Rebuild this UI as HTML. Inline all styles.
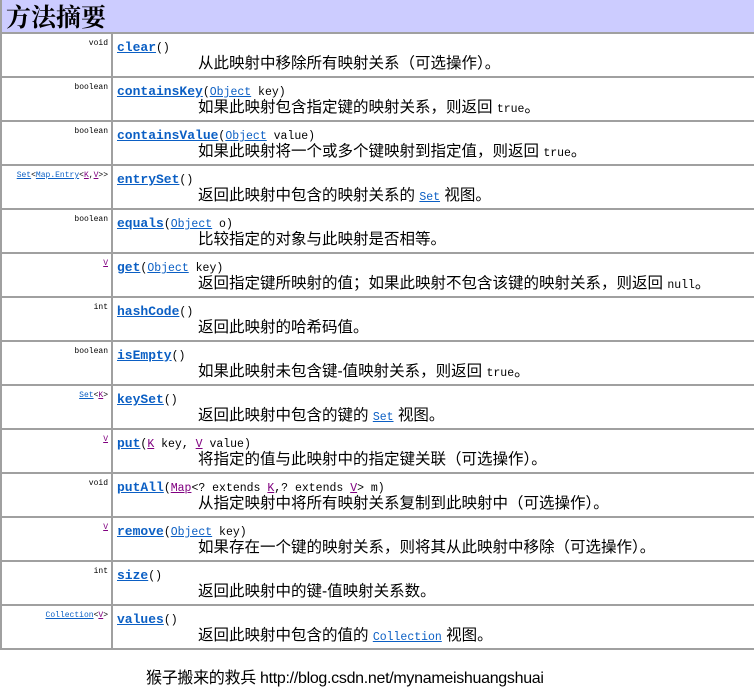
<!DOCTYPE html>
<html><head><meta charset="utf-8"><style>
*{margin:0;padding:0;box-sizing:border-box}
body{width:754px;height:689px;background:#fff;position:relative;overflow:hidden;font-family:"Liberation Sans","Noto Sans CJK SC",sans-serif}
.hd{position:absolute;left:0;top:0;width:754px;height:34px;background:#ccccff;border-bottom:2px solid #a0a0a0;border-left:2px solid #a0a0a0}
.hd span{position:absolute;left:4px;top:0px;line-height:32px;font-size:25px;font-family:"Noto Serif CJK SC","Noto Sans CJK SC",serif;color:#000;font-weight:bold}
.row{position:absolute;left:0;width:754px;height:44px;border-bottom:2px solid #a0a0a0;border-left:2px solid #a0a0a0}
.l{position:absolute;left:0;top:0;width:111px;height:42px;border-right:2px solid #a0a0a0}
.t{position:absolute;right:3px;top:5px;font-family:"Liberation Mono",monospace;font-size:8px;color:#000;white-space:nowrap}
.n{position:absolute;left:115px;top:6px;font-family:"Liberation Mono",monospace;font-size:11.5px;line-height:15px;white-space:nowrap;color:#000}
.n b{font-size:13px;color:#0b5fc4;text-decoration:underline}
.d{position:absolute;left:196px;top:21px;font-size:15.5px;line-height:17px;white-space:nowrap;font-family:"Liberation Sans","Noto Sans CJK SC",sans-serif;color:#000}
a{color:#0b5fc4;text-decoration:underline}
.p{color:#800080;text-decoration:underline}
.c{font-family:"Liberation Mono",monospace;font-size:11.5px}
.ft{position:absolute;left:146px;top:669px;font-size:16px;line-height:20px;color:#000;white-space:nowrap;letter-spacing:-0.3px}
</style></head><body>
<div class="hd"><span>方法摘要</span></div>

<div class="row" style="top:34px"><div class="l"><span class="t">void</span></div><div class="n"><b>clear</b>()</div><div class="d">从此映射中移除所有映射关系（可选操作）。</div></div>
<div class="row" style="top:78px"><div class="l"><span class="t">boolean</span></div><div class="n"><b>containsKey</b>(<a>Object</a> key)</div><div class="d">如果此映射包含指定键的映射关系，则返回 <span class="c">true</span>。</div></div>
<div class="row" style="top:122px"><div class="l"><span class="t">boolean</span></div><div class="n"><b>containsValue</b>(<a>Object</a> value)</div><div class="d">如果此映射将一个或多个键映射到指定值，则返回 <span class="c">true</span>。</div></div>
<div class="row" style="top:166px"><div class="l"><span class="t"><a>Set</a>&lt;<a>Map.Entry</a>&lt;<span class="p">K</span>,<span class="p">V</span>&gt;&gt;</span></div><div class="n"><b>entrySet</b>()</div><div class="d">返回此映射中包含的映射关系的 <a class="c">Set</a> 视图。</div></div>
<div class="row" style="top:210px"><div class="l"><span class="t">boolean</span></div><div class="n"><b>equals</b>(<a>Object</a> o)</div><div class="d">比较指定的对象与此映射是否相等。</div></div>
<div class="row" style="top:254px"><div class="l"><span class="t"><span class="p">V</span></span></div><div class="n"><b>get</b>(<a>Object</a> key)</div><div class="d">返回指定键所映射的值；如果此映射不包含该键的映射关系，则返回 <span class="c">null</span>。</div></div>
<div class="row" style="top:298px"><div class="l"><span class="t">int</span></div><div class="n"><b>hashCode</b>()</div><div class="d">返回此映射的哈希码值。</div></div>
<div class="row" style="top:342px"><div class="l"><span class="t">boolean</span></div><div class="n"><b>isEmpty</b>()</div><div class="d">如果此映射未包含键-值映射关系，则返回 <span class="c">true</span>。</div></div>
<div class="row" style="top:386px"><div class="l"><span class="t"><a>Set</a>&lt;<span class="p">K</span>&gt;</span></div><div class="n"><b>keySet</b>()</div><div class="d">返回此映射中包含的键的 <a class="c">Set</a> 视图。</div></div>
<div class="row" style="top:430px"><div class="l"><span class="t"><span class="p">V</span></span></div><div class="n"><b>put</b>(<span class="p">K</span> key, <span class="p">V</span> value)</div><div class="d">将指定的值与此映射中的指定键关联（可选操作）。</div></div>
<div class="row" style="top:474px"><div class="l"><span class="t">void</span></div><div class="n"><b>putAll</b>(<span class="p">Map</span>&lt;? extends <span class="p">K</span>,? extends <span class="p">V</span>&gt; m)</div><div class="d">从指定映射中将所有映射关系复制到此映射中（可选操作）。</div></div>
<div class="row" style="top:518px"><div class="l"><span class="t"><span class="p">V</span></span></div><div class="n"><b>remove</b>(<a>Object</a> key)</div><div class="d">如果存在一个键的映射关系，则将其从此映射中移除（可选操作）。</div></div>
<div class="row" style="top:562px"><div class="l"><span class="t">int</span></div><div class="n"><b>size</b>()</div><div class="d">返回此映射中的键-值映射关系数。</div></div>
<div class="row" style="top:606px"><div class="l"><span class="t"><a>Collection</a>&lt;<span class="p">V</span>&gt;</span></div><div class="n"><b>values</b>()</div><div class="d">返回此映射中包含的值的 <a class="c">Collection</a> 视图。</div></div>

<div class="ft">猴子搬来的救兵 http://blog.csdn.net/mynameishuangshuai</div>
</body></html>
